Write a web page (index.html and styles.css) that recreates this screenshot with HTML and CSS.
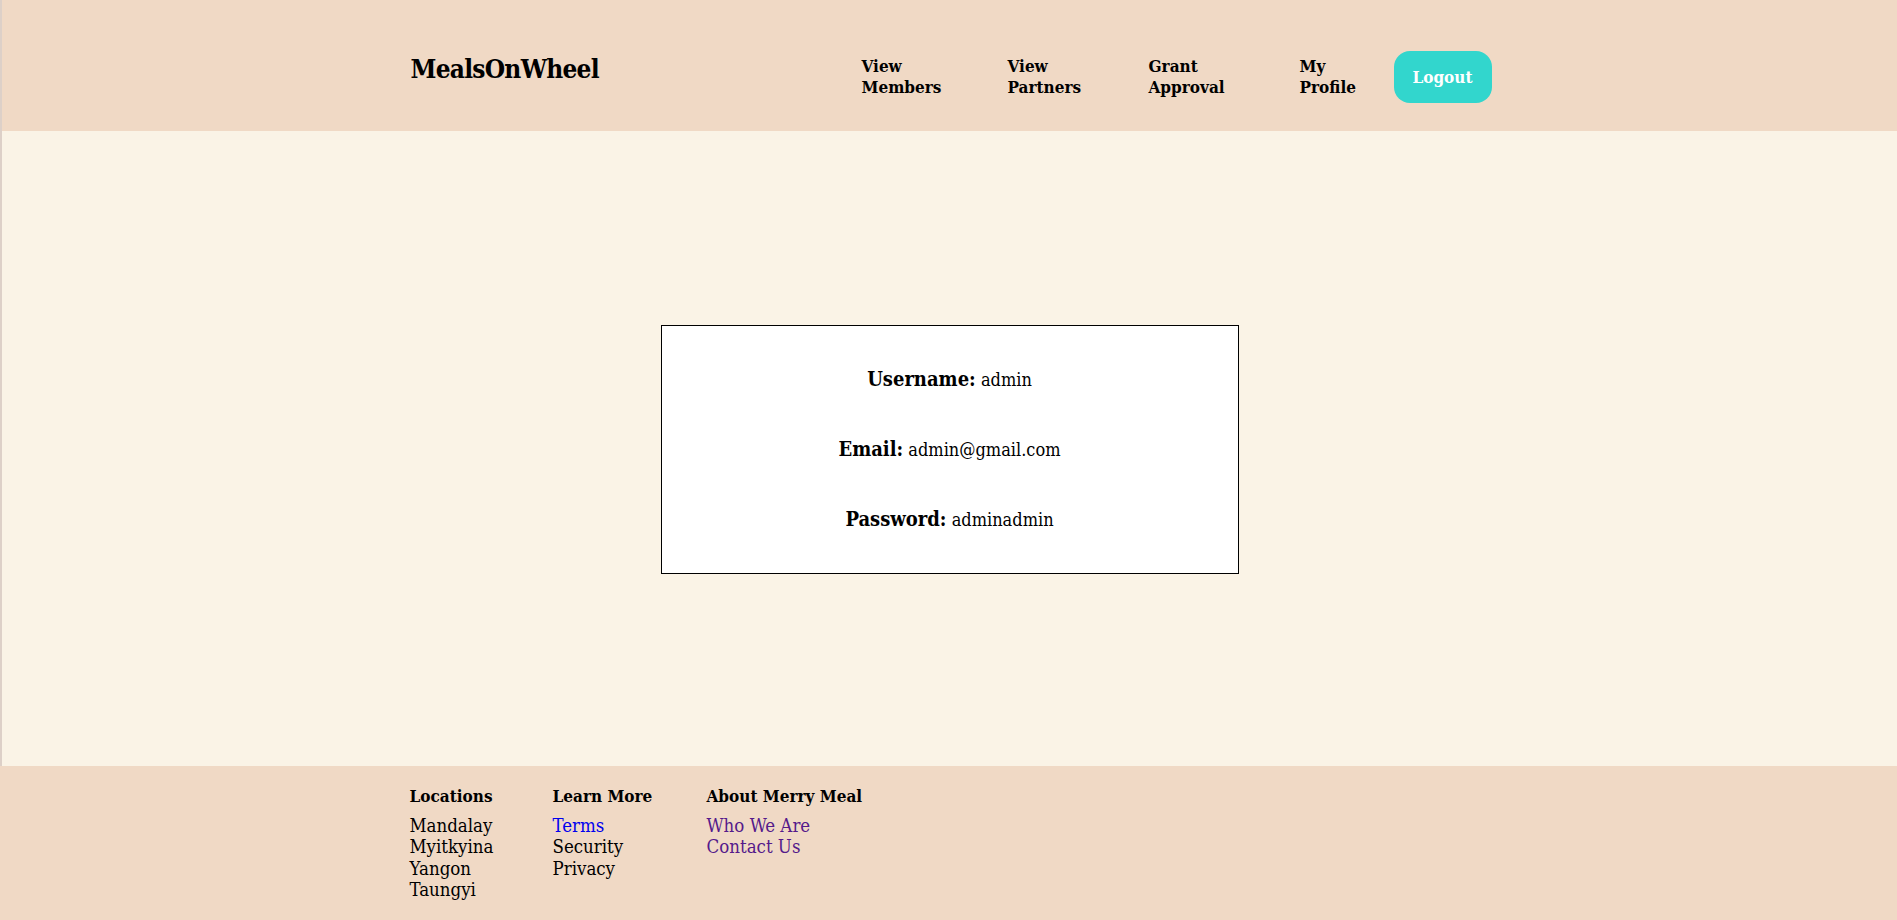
FILE: index.html
```html
<!DOCTYPE html>
<html lang="en">
<head>
<meta charset="utf-8">
<title>MealsOnWheel</title>
<link rel="stylesheet" href="styles.css">
</head>
<body>
<div class="page">
  <header class="site-header">
    <div class="container header-inner">
      <div class="logo">MealsOnWheel</div>
      <nav class="nav">
        <a class="nav-link" href="#">View Members</a>
        <a class="nav-link" href="#">View Partners</a>
        <a class="nav-link" href="#">Grant Approval</a>
        <a class="nav-link" href="#">My Profile</a>
        <a class="logout" href="#">Logout</a>
      </nav>
    </div>
  </header>
  <main class="main">
    <section class="card">
      <p class="row"><strong>Username:</strong> admin</p>
      <p class="row"><strong>Email:</strong> admin@gmail.com</p>
      <p class="row"><strong>Password:</strong> adminadmin</p>
    </section>
  </main>
  <footer class="site-footer">
    <div class="container footer-inner">
      <div class="fcol col-loc">
        <h4 class="fhead">Locations</h4>
        <span>Mandalay</span>
        <span>Myitkyina</span>
        <span>Yangon</span>
        <span>Taungyi</span>
      </div>
      <div class="fcol col-learn">
        <h4 class="fhead">Learn More</h4>
        <a class="link-new" href="#">Terms</a>
        <span>Security</span>
        <span>Privacy</span>
      </div>
      <div class="fcol">
        <h4 class="fhead">About Merry Meal</h4>
        <a class="link-visited" href="#">Who We Are</a>
        <a class="link-visited" href="#">Contact Us</a>
      </div>
    </div>
  </footer>
</div>
</body>
</html>
```

FILE: styles.css
```css
* { box-sizing: border-box; }
html, body { margin: 0; padding: 0; }
body {
  font-family: "DejaVu Serif Condensed", "DejaVu Serif", serif;
  font-stretch: condensed;
  color: #000;
  background: #f0d9c5;
}
.page {
  display: flex;
  flex-direction: column;
  height: 920px;
}
.container {
  width: 1081px;
  margin-left: calc(50% - 539px);
}
.site-header {
  background: #f0d9c5;
  height: 131px;
  border-left: 2px solid #ddd0c8;
}
.header-inner {
  display: flex;
  justify-content: space-between;
  align-items: flex-start;
  padding-top: 51px;
}
.logo {
  font-weight: 700;
  font-size: 26px;
  line-height: 30px;
  margin-top: 3px;
  letter-spacing: -0.75px;
}
.nav {
  display: grid;
  grid-template-columns: 146px 141px 151px 94px 98px;
  align-items: center;
  height: 52px;
}
.nav-link {
  color: #000;
  text-decoration: none;
  font-weight: 700;
  font-size: 17px;
  line-height: 21px;
  width: min-content;
}
.logout {
  display: flex;
  align-items: center;
  justify-content: center;
  height: 52px;
  background: #32d6cd;
  color: #fff;
  font-weight: 700;
  font-size: 17px;
  text-decoration: none;
  border-radius: 16px;
}
.main {
  flex: 1;
  background: #faf3e6;
  border-left: 2px solid #ddd0c8;
  display: flex;
  align-items: center;
  justify-content: center;
}
.card {
  width: 578px;
  height: 249px;
  background: #fff;
  border: 1px solid #000;
  display: flex;
  flex-direction: column;
  justify-content: center;
  gap: 45px;
  text-align: center;
  margin-top: 2px;
}
.row {
  margin: 0;
  font-size: 18px;
  line-height: 24px;
}
.row strong { font-size: 20px; }
.site-footer {
  background: #f0d9c5;
  height: 154px;
}
.footer-inner {
  display: flex;
  padding-top: 20px;
}
.fcol {
  display: flex;
  flex-direction: column;
  font-size: 18.5px;
  line-height: 21.3px;
}
.col-loc { width: 143px; }
.col-learn { width: 154px; }
.fhead {
  margin: 0 0 8px;
  font-size: 17px;
  line-height: 21px;
  font-weight: 700;
}
.fcol a { text-decoration: none; }
.link-new { color: #0000ee; }
.link-visited { color: #551a8b; }
```
